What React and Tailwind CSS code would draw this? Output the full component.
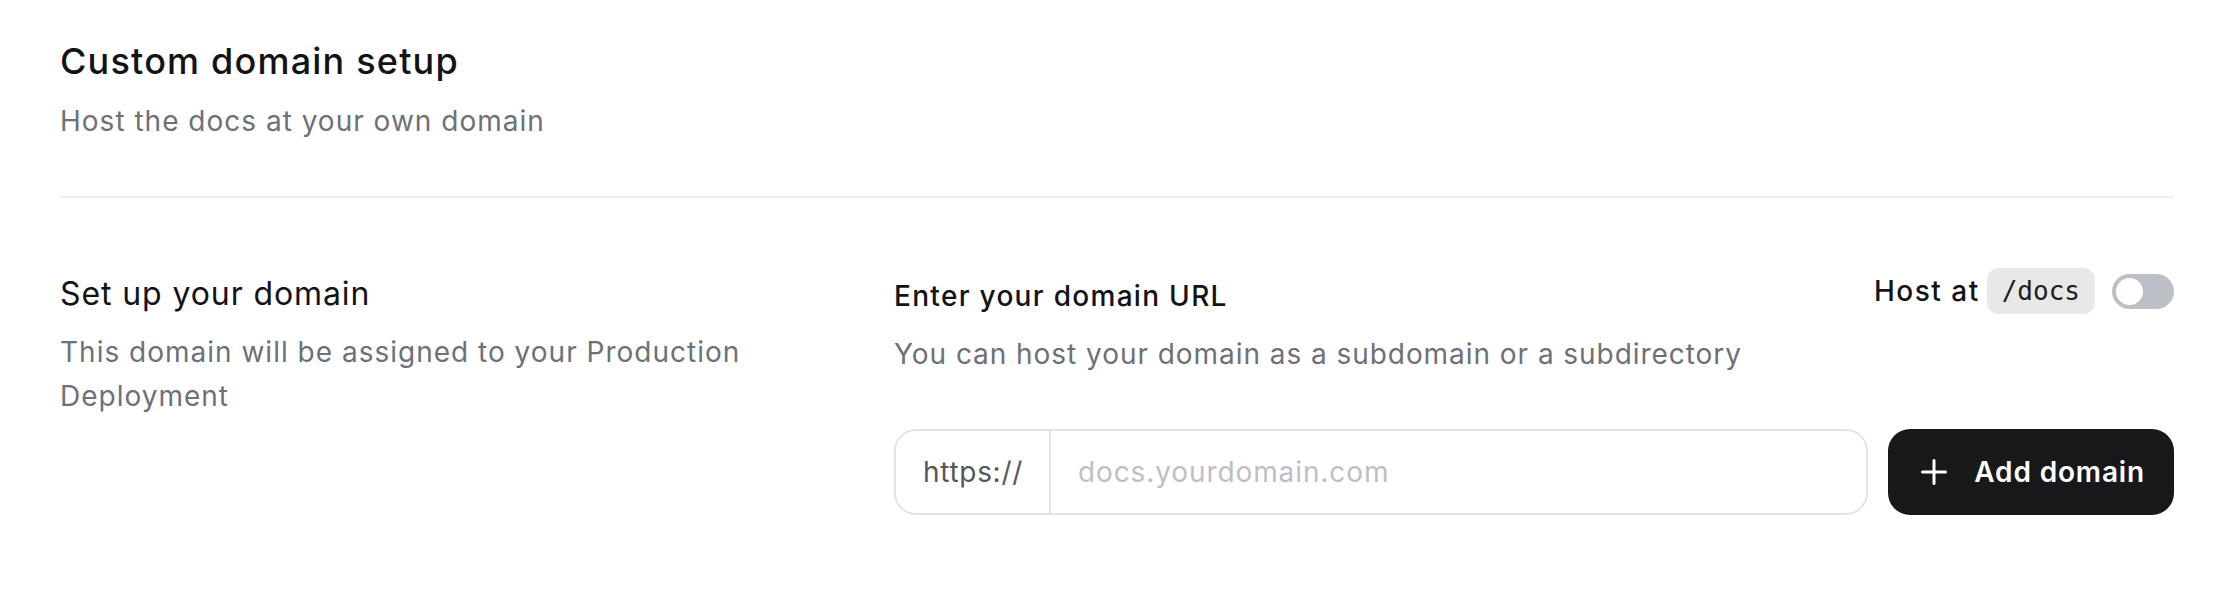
export default function App() {
  return (
    <div
      className="w-[2236px] h-[608px] bg-white pt-[33px] pl-[60px] pr-[62px]"
      style={{ fontFamily: "Inter, 'Noto Sans', sans-serif" }}
    >
      <h1 className="text-[36px] leading-[56px] font-medium text-[#131316] tracking-[1.2px]">
        Custom domain setup
      </h1>
      <p className="mt-[12px] text-[28px] leading-[40px] text-[#6e7079] tracking-[1px]">
        Host the docs at your own domain
      </p>
      <div className="mt-[55px] h-[2px] bg-[#efeff0]" />

      <div className="mt-[70px] flex gap-[54px]">
        <div className="w-[780px] shrink-0">
          <h2 className="mt-[4px] text-[32px] leading-[44px] font-normal text-[#131316] tracking-[0.9px]">
            Set up your domain
          </h2>
          <p className="mt-[14px] text-[28px] leading-[44px] text-[#6e7079] tracking-[1px]">
            This domain will be assigned to your Production Deployment
          </p>
        </div>

        <div className="flex-1 min-w-0">
          <div className="flex items-start justify-between">
            <h3 className="mt-[8px] text-[28px] leading-[40px] font-medium text-[#131316] tracking-[1.3px]">
              Enter your domain URL
            </h3>
            <div className="flex items-center h-[46px]">
              <span className="text-[28px] leading-[40px] font-medium text-[#131316] tracking-[1.5px]">
                Host at
              </span>
              <span
                className="ml-[7px] h-[46px] px-[15px] flex items-center rounded-[12px] bg-[#e8e8e9] text-[26px] text-[#1d1d20]"
                style={{ fontFamily: "'DejaVu Sans Mono', 'Liberation Mono', monospace" }}
              >
                /docs
              </span>
              <button
                type="button"
                className="ml-[17px] relative w-[62px] h-[35px] rounded-full bg-[#bcbfc5]"
              >
                <span className="absolute left-[4px] top-[4px] w-[27px] h-[27px] rounded-full bg-white" />
              </button>
            </div>
          </div>
          <p className="mt-[16px] text-[28px] leading-[44px] text-[#6e7079] tracking-[0.95px]">
            You can host your domain as a subdomain or a subdirectory
          </p>

          <div className="mt-[53px] flex items-stretch gap-[20px]">
            <div className="flex-1 h-[86px] flex items-stretch rounded-[22px] border-2 border-[#e3e3e6] overflow-hidden">
              <div className="flex items-center pl-[27px] pr-[26px] border-r-2 border-[#e3e3e6] text-[28px] text-[#55575e] tracking-[0.7px]">
                https://
              </div>
              <input
                type="text"
                placeholder="docs.yourdomain.com"
                className="flex-1 min-w-0 pl-[27px] text-[28px] tracking-[0.9px] text-[#131316] placeholder-[#bdbfc5] outline-none bg-transparent"
              />
            </div>
            <button
              type="button"
              className="h-[86px] flex items-center gap-[27px] pl-[33px] pr-[29px] rounded-[22px] bg-[#18181b] text-white text-[28px] font-semibold tracking-[0.85px]"
            >
              <svg width="26" height="26" viewBox="0 0 26 26" fill="none">
                <path
                  d="M13 1.5v23M1.5 13h23"
                  stroke="white"
                  strokeWidth="3"
                  strokeLinecap="round"
                />
              </svg>
              Add domain
            </button>
          </div>
        </div>
      </div>
    </div>
  );
}
